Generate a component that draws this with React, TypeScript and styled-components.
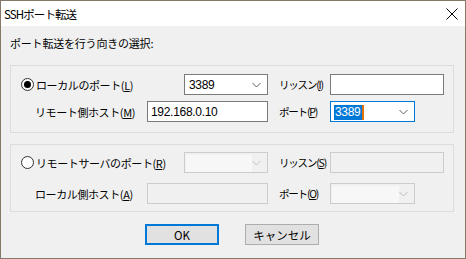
import React, { FC } from 'react';
import styled, { createGlobalStyle, css } from 'styled-components';

const GlobalStyle = createGlobalStyle`
  html, body {
    margin: 0;
    padding: 0;
    background: #ffffff;
  }
  body {
    font-family: "Noto Sans CJK JP", "Noto Sans", sans-serif;
    font-size: 11px;
    color: #000000;
  }
`;

const Window = styled.div`
  width: 466px;
  height: 259px;
  box-sizing: border-box;
  border: 1px solid #857a68;
  background-color: #f0f0f0;
  display: flex;
  flex-direction: column;
`;

const TitleBar = styled.div`
  height: 25px;
  background-color: #ffffff;
  display: flex;
  align-items: center;
  justify-content: space-between;
  padding: 0 7px 0 3px;
`;

const TitleText = styled.span`
  font-size: 11.5px;
  line-height: 14px;
  letter-spacing: -0.9px;
`;

const Body = styled.div`
  flex: 1;
  padding: 9px 9px 0 9px;
  display: flex;
  flex-direction: column;
`;

const Heading = styled.div`
  height: 17px;
  line-height: 17px;
  letter-spacing: -0.2px;
  margin-bottom: 13px;
`;

const Group = styled.div<{ $top: number; $gap: number; $bottom: number }>`
  width: 444px;
  box-sizing: border-box;
  border: 1px solid #dcdcdc;
  padding: ${p => p.$top}px 0 ${p => p.$bottom}px 9px;
  display: flex;
  flex-direction: column;
  gap: ${p => p.$gap}px;
  & + & {
    margin-top: 11px;
  }
`;

const Row = styled.div`
  display: flex;
  align-items: center;
  height: 21px;
`;

const Label = styled.label<{ $w: number; $indent?: number; $tight?: boolean }>`
  width: ${p => p.$w}px;
  padding-left: ${p => p.$indent || 0}px;
  box-sizing: border-box;
  display: flex;
  align-items: center;
  white-space: nowrap;
  line-height: 14px;
  flex-shrink: 0;
  font-size: ${p => (p.$tight ? '10.5px' : '11px')};
  letter-spacing: ${p => (p.$tight ? '-1.2px' : '-0.4px')};
`;

const RadioCircle = styled.span<{ $on?: boolean }>`
  width: 13px;
  height: 13px;
  box-sizing: border-box;
  border: 1px solid #333333;
  border-radius: 50%;
  margin: 0 2px 0 1px;
  display: inline-flex;
  align-items: center;
  justify-content: center;
  background: #ffffff;
  &::after {
    content: '';
    width: 7px;
    height: 7px;
    border-radius: 50%;
    background: #000000;
    display: ${p => (p.$on ? 'block' : 'none')};
  }
`;

const boxBase = css<{ $w: number; $off?: boolean; $focus?: boolean }>`
  width: ${p => p.$w}px;
  height: 21px;
  box-sizing: border-box;
  border: 1px solid
    ${p => (p.$focus ? '#0078d7' : p.$off ? '#cccccc' : '#7a7a7a')};
  background: ${p => (p.$off ? '#f0f0f0' : '#ffffff')};
  flex-shrink: 0;
  font-family: "Liberation Sans", Arial, sans-serif;
  font-size: 12px;
`;

const TextBox = styled.div<{ $w: number; $off?: boolean; $focus?: boolean }>`
  ${boxBase};
  padding: 0 3px;
  display: flex;
  align-items: center;
  letter-spacing: -0.3px;
`;

const Combo = styled.div<{ $w: number; $off?: boolean; $focus?: boolean }>`
  ${boxBase};
  display: flex;
  align-items: center;
  padding: 1px 6px 0 3px;
  justify-content: space-between;
`;

const ComboValue = styled.span<{ $sel?: boolean; $off?: boolean }>`
  display: inline-flex;
  align-items: center;
  height: 15px;
  padding: 0 1px;
  letter-spacing: -0.3px;
  ${p =>
    p.$sel &&
    css`
      background: #0078d7;
      color: #ffffff;
      border-right: 2px solid #e2720c;
    `}
  ${p =>
    p.$off &&
    css`
      width: 65px;
      height: 17px;
      background: #f7f7f7;
      margin-left: -2px;
    `}
`;

const Gap = styled.span<{ $w: number }>`
  width: ${p => p.$w}px;
  flex-shrink: 0;
`;

const ButtonRow = styled.div`
  display: flex;
  justify-content: center;
  gap: 26px;
  margin-top: 12px;
  padding-right: 2px;
`;

const Button = styled.button<{ $def?: boolean }>`
  width: 74px;
  height: 21px;
  box-sizing: border-box;
  background: #e1e1e1;
  border: ${p => (p.$def ? '2px solid #0078d7' : '1px solid #adadad')};
  font-family: "Noto Sans CJK JP", sans-serif;
  font-size: 11.5px;
  line-height: 14px;
  padding: 0;
  color: #000000;
`;

const Chevron: FC<{ off?: boolean }> = ({ off }) => (
  <svg width="9" height="6" viewBox="0 0 9 6">
    <polyline
      points="0.5,1 4.5,5 8.5,1"
      fill="none"
      stroke={off ? '#bfbfbf' : '#606060'}
      strokeWidth="1"
    />
  </svg>
);

const CloseIcon: FC = () => (
  <svg width="12" height="12" viewBox="0 0 12 12">
    <path d="M0.5 0.5 L11.5 11.5 M11.5 0.5 L0.5 11.5" stroke="#000" strokeWidth="1" />
  </svg>
);

const App: FC = () => {
  return (
    <>
      <GlobalStyle />
      <Window>
        <TitleBar>
          <TitleText>SSHポート転送</TitleText>
          <CloseIcon />
        </TitleBar>
        <Body>
          <Heading>ポート転送を行う向きの選択:</Heading>

          <Group $top={8} $gap={6} $bottom={10}>
            <Row>
              <Label $w={164}>
                <RadioCircle $on />
                ローカルのポート(<u>L</u>)
              </Label>
              <Combo $w={84}>
                <ComboValue>3389</ComboValue>
                <Chevron />
              </Combo>
              <Gap $w={11} />
              <Label $w={51} $tight>
                リッスン(<u>I</u>)
              </Label>
              <TextBox $w={114} />
            </Row>
            <Row>
              <Label $w={127} $indent={15}>
                リモート側ホスト(<u>M</u>)
              </Label>
              <TextBox $w={121}>192.168.0.10</TextBox>
              <Gap $w={11} />
              <Label $w={51} $tight>
                ポート(<u>P</u>)
              </Label>
              <Combo $w={85} $focus>
                <ComboValue $sel>3389</ComboValue>
                <Chevron />
              </Combo>
            </Row>
          </Group>

          <Group $top={7} $gap={10} $bottom={7}>
            <Row>
              <Label $w={164}>
                <RadioCircle />
                リモートサーバのポート(<u>R</u>)
              </Label>
              <Combo $w={84} $off>
                <ComboValue $off />
                <Chevron off />
              </Combo>
              <Gap $w={11} />
              <Label $w={51} $tight>
                リッスン(<u>S</u>)
              </Label>
              <TextBox $w={114} $off />
            </Row>
            <Row>
              <Label $w={127} $indent={15}>
                ローカル側ホスト(<u>A</u>)
              </Label>
              <TextBox $w={121} $off />
              <Gap $w={11} />
              <Label $w={51} $tight>
                ポート(<u>O</u>)
              </Label>
              <Combo $w={85} $off>
                <ComboValue $off />
                <Chevron off />
              </Combo>
            </Row>
          </Group>

          <ButtonRow>
            <Button $def>OK</Button>
            <Button>キャンセル</Button>
          </ButtonRow>
        </Body>
      </Window>
    </>
  );
};

export default App;
